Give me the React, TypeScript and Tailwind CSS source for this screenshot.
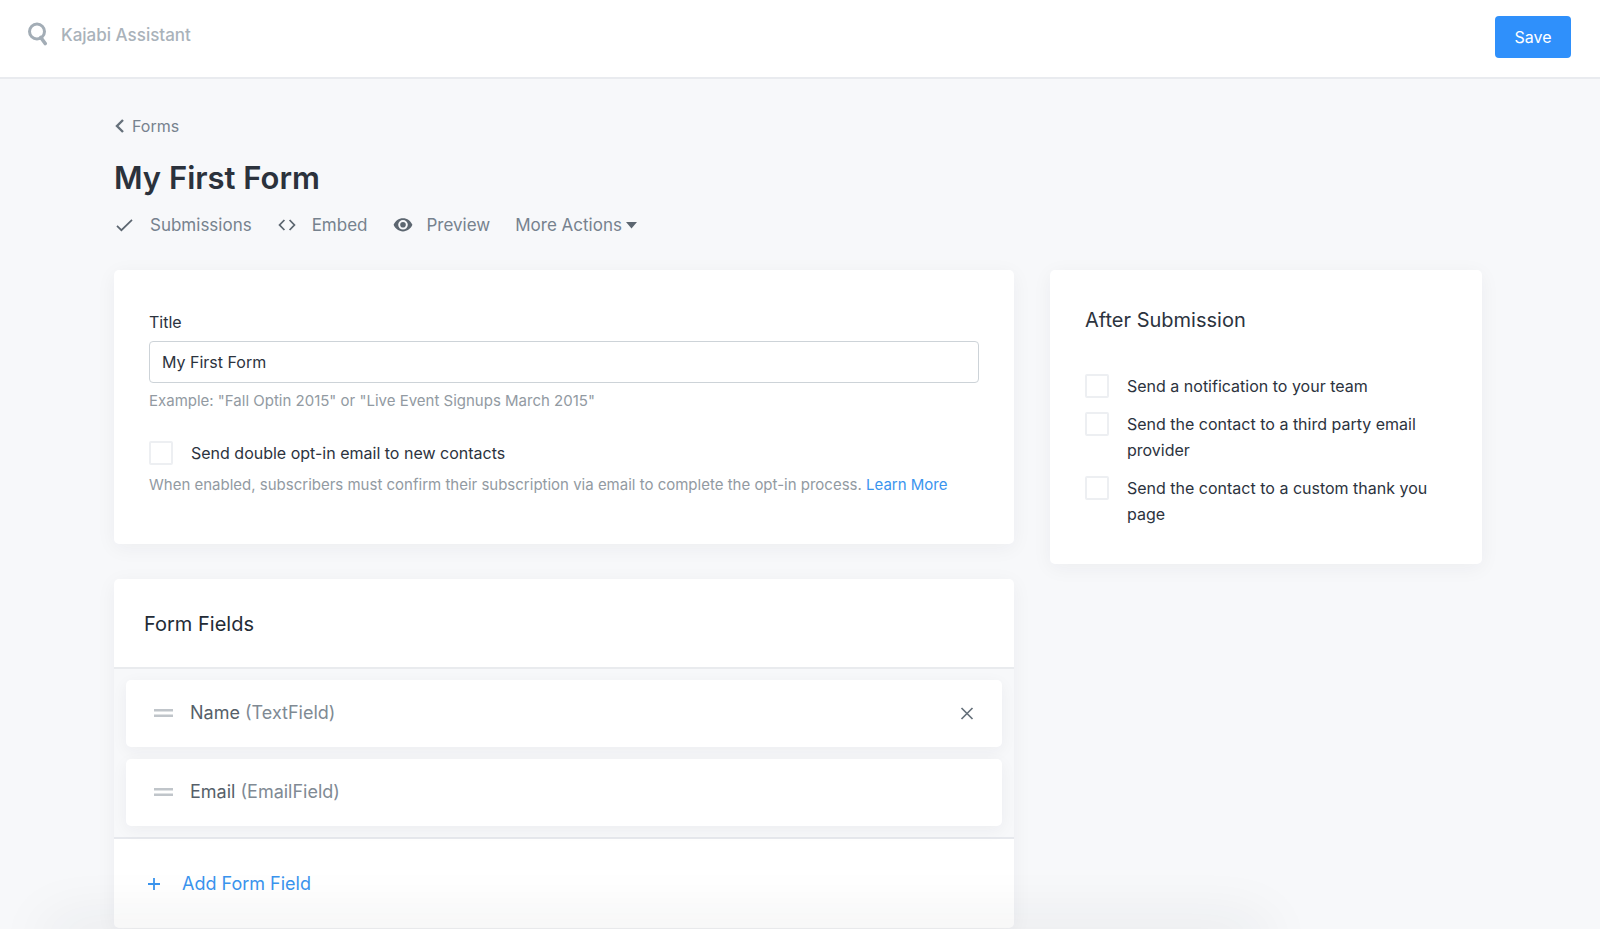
import { useState, type ReactNode } from "react";

const FIELDS = [
  { name: "Name", type: "TextField", removable: true },
  { name: "Email", type: "EmailField", removable: false },
];

const AFTER_SUBMISSION = [
  { id: "notify", label: "Send a notification to your team" },
  { id: "provider", label: "Send the contact to a third party email provider" },
  { id: "thankyou", label: "Send the contact to a custom thank you page" },
];

function Card({ className = "", children }: { className?: string; children: ReactNode }) {
  return (
    <section className={`rounded-[5px] bg-white shadow-[0_4px_20px_rgba(35,40,50,0.05)] ${className}`}>
      {children}
    </section>
  );
}

function CheckRow({ id, label, className = "" }: { id: string; label: string; className?: string }) {
  return (
    <div className={`flex items-start gap-[18px] ${className}`}>
      <input
        id={id}
        type="checkbox"
        className="mt-px size-6 shrink-0 appearance-none rounded-[2px] border-2 border-[#edeff2] bg-white checked:bg-[#2f90fb]"
      />
      <label htmlFor={id} className="text-[16px] leading-[26px] text-[#2c333e]">
        {label}
      </label>
    </div>
  );
}

function Header() {
  return (
    <header className="flex h-[79px] items-start justify-between border-b-2 border-[#e9ebef] bg-white pr-[29px] pl-7">
      <div className="flex items-center gap-[13px] pt-[22px]">
        <svg className="h-6 w-5" viewBox="0 0 20 24" fill="none" stroke="#a3adb6" aria-hidden="true">
          <circle cx="9" cy="9.5" r="7.5" strokeWidth="3" />
          <path d="M12.8 15.5l4.4 6" strokeWidth="3.6" strokeLinecap="round" />
        </svg>
        <input
          type="text"
          aria-label="Kajabi Assistant"
          placeholder="Kajabi Assistant"
          className="h-6 w-[320px] pt-[3px] text-[17px] font-medium outline-none placeholder:text-[#a9b2ba]"
        />
      </div>
      <button className="mt-4 h-[42px] w-[76px] rounded bg-[#2f90fb] text-[16px] text-white">Save</button>
    </header>
  );
}

function Toolbar() {
  return (
    <nav className="mt-[13px] flex items-center text-[17px] leading-[26px] text-[#76828e]">
      <a href="#submissions" className="mr-[25px] flex items-center gap-[14px]">
        <svg className="h-5 w-[22px]" viewBox="0 0 22 20" fill="none" stroke="#5c6670" strokeWidth="1.7" aria-hidden="true">
          <path d="M3 10.8l4.4 4.4L18 4.8" />
        </svg>
        Submissions
      </a>
      <a href="#embed" className="mr-[25px] flex items-center gap-[14px]">
        <svg className="h-5 w-[21px]" viewBox="0 0 21 20" fill="none" stroke="#5c6670" strokeWidth="1.8" aria-hidden="true">
          <path d="M7.4 5L2.6 10l4.8 5M12.6 5l4.8 5-4.8 5" />
        </svg>
        Embed
      </a>
      <a href="#preview" className="mr-[25px] flex items-center gap-[14px]">
        <svg className="h-5 w-[20px]" viewBox="0 0 20 20" aria-hidden="true">
          <path
            fill="#5c6670"
            fillRule="evenodd"
            d="M10 3.2C5.8 3.2 2.2 5.9.6 9.8c1.6 3.9 5.2 6.6 9.4 6.6s7.8-2.7 9.4-6.6C17.8 5.9 14.2 3.2 10 3.2zm0 11.4a4.8 4.8 0 1 1 0-9.6 4.8 4.8 0 0 1 0 9.6z"
          />
          <circle cx="10" cy="9.8" r="2.8" fill="#5c6670" />
        </svg>
        Preview
      </a>
      <button className="flex items-center gap-1">
        More Actions
        <svg className="h-[7px] w-[11px]" viewBox="0 0 11 7" fill="#5c6670" aria-hidden="true">
          <path d="M0 0h11L5.5 6.5z" />
        </svg>
      </button>
    </nav>
  );
}

function FormFields() {
  return (
    <Card className="mt-[35px]">
      <h2 className="border-b-2 border-[#e9ebee] px-[30px] pt-[29px] pb-[27px] text-[20px] leading-[32px] text-[#232b36]">
        Form Fields
      </h2>
      <ul className="flex flex-col gap-3 border-b-2 border-[#e6e8ed] bg-[#f7f8fa] px-3 py-[11px]">
        {FIELDS.map((f) => (
          <li
            key={f.name}
            className="flex h-[67px] items-center rounded-[5px] bg-white px-7 pb-px shadow-[0_4px_16px_rgba(35,40,50,0.05)]"
          >
            <svg className="h-2 w-[19px]" viewBox="0 0 19 8" fill="#c0c5ca" aria-hidden="true">
              <path d="M0 0h19v2.5H0zM0 5.5h19V8H0z" />
            </svg>
            <span className="ml-[17px] text-[18px] leading-[28px] text-[#565f69]">
              {f.name} <span className="text-[#808a94]">({f.type})</span>
            </span>
            {f.removable && (
              <button aria-label={`Remove ${f.name}`} className="ml-auto">
                <svg className="size-[14px]" viewBox="0 0 14 14" fill="none" stroke="#66717b" strokeWidth="1.7" aria-hidden="true">
                  <path d="M1.5 2l11 11M12.5 2l-11 11" />
                </svg>
              </button>
            )}
          </li>
        ))}
      </ul>
      <div className="py-[30px] pl-[34px]">
        <button className="flex items-center gap-[22px] text-[18px] leading-[29px] text-[#3a94ee]">
          <svg className="size-3" viewBox="0 0 12 12" fill="none" stroke="currentColor" strokeWidth="1.8" aria-hidden="true">
            <path d="M6 0v12M0 6h12" />
          </svg>
          Add Form Field
        </button>
      </div>
    </Card>
  );
}

export default function App() {
  const [title, setTitle] = useState("My First Form");

  return (
    <div className="flex min-h-screen flex-col bg-white font-['Inter',sans-serif]">
      <Header />
      <main className="relative mb-0.5 grow overflow-hidden bg-[#f7f8fa] pt-[34px] pr-[118px] pl-[114px]">
        <a href="#forms" className="inline-flex items-center gap-2 text-[16px] leading-[26px] text-[#76828e]">
          <svg className="h-[14px] w-[10px]" viewBox="0 0 10 14" fill="none" stroke="#66717b" strokeWidth="2.4" aria-hidden="true">
            <path d="M9 1L3 7l6 6" />
          </svg>
          Forms
        </a>
        <h1 className="mt-[18px] text-[31px] leading-[42px] font-semibold text-[#2b323c]">My First Form</h1>
        <Toolbar />
        <div className="mt-8 grid grid-cols-[25fr_12fr] items-start gap-9">
          <div>
            <Card className="px-[35px] pt-[39px] pb-[46px]">
              <label htmlFor="title" className="block text-[16px] leading-[26px] text-[#2c333e]">
                Title
              </label>
              <input
                id="title"
                type="text"
                value={title}
                onChange={(e) => setTitle(e.target.value)}
                className="mt-[6px] block h-[42px] w-full rounded border border-[#cdd3d8] px-3 text-[16px] text-[#2c333e] outline-none"
              />
              <p className="mt-[5px] text-[15px] leading-[26px] text-[#929aa2]">
                Example: "Fall Optin 2015" or "Live Event Signups March 2015"
              </p>
              <CheckRow id="double-optin" label="Send double opt-in email to new contacts" className="mt-[26px]" />
              <p className="mt-[6px] text-[15px] leading-[26px] text-[#929aa2]">
                When enabled, subscribers must confirm their subscription via email to complete the opt-in process.{" "}
                <a href="#learn-more" className="text-[#3a94ee]">
                  Learn More
                </a>
              </p>
            </Card>
            <FormFields />
          </div>
          <Card className="px-[35px] pt-[34px] pb-[37px]">
            <h2 className="text-[20px] leading-[32px] text-[#2c333e]">After Submission</h2>
            <div className="mt-[37px] flex flex-col gap-3">
              {AFTER_SUBMISSION.map((o) => (
                <CheckRow key={o.id} id={o.id} label={o.label} />
              ))}
            </div>
          </Card>
        </div>
        {/* soft shade rising from the bottom edge */}
        <div className="pointer-events-none absolute -bottom-5 left-[3%] h-5 w-[76%] shadow-[0_0_60px_rgba(35,40,50,0.14)]" />
      </main>
    </div>
  );
}
